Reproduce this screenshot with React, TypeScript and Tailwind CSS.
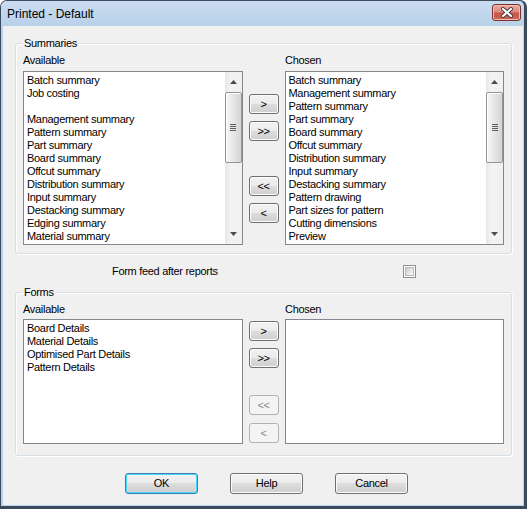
import type { ReactNode } from "react";

const summaryAvailable = [
  "Batch summary",
  "Job costing",
  "",
  "Management summary",
  "Pattern summary",
  "Part summary",
  "Board summary",
  "Offcut summary",
  "Distribution summary",
  "Input summary",
  "Destacking summary",
  "Edging summary",
  "Material summary",
];

const summaryChosen = [
  "Batch summary",
  "Management summary",
  "Pattern summary",
  "Part summary",
  "Board summary",
  "Offcut summary",
  "Distribution summary",
  "Input summary",
  "Destacking summary",
  "Pattern drawing",
  "Part sizes for pattern",
  "Cutting dimensions",
  "Preview",
];

const formsAvailable = ["Board Details", "Material Details", "Optimised Part Details", "Pattern Details"];

function Arrow({ down }: { down?: boolean }) {
  return (
    <svg width="7" height="4" viewBox="0 0 7 4" className={down ? "rotate-180" : ""}>
      <path d="M3.5 0L7 4H0z" fill="#4a4a4a" />
    </svg>
  );
}

function ScrollBar() {
  return (
    <div className="flex w-[17px] flex-col bg-[linear-gradient(to_right,#e6e6e6,#f3f3f3_30%,#f0f0f0)]">
      <div className="flex h-[20px] items-center justify-center">
        <Arrow />
      </div>
      <div className="flex h-[71px] items-center justify-center rounded-[2px] border border-[#959595] bg-[linear-gradient(to_right,#f7f7f7,#e8e8e8_45%,#d4d4d4)] shadow-[inset_1px_1px_0_#ffffff]">
        <div className="flex flex-col gap-[1px]">
          <div className="h-[1px] w-[6px] bg-[#5e5e5e]" />
          <div className="h-[1px] w-[6px] bg-[#5e5e5e]" />
          <div className="h-[1px] w-[6px] bg-[#5e5e5e]" />
          <div className="h-[1px] w-[6px] bg-[#5e5e5e]" />
        </div>
      </div>
      <div className="flex-1" />
      <div className="flex h-[20px] items-center justify-center">
        <Arrow down />
      </div>
    </div>
  );
}

function ListBox({ items, tall }: { items: string[]; tall?: boolean }) {
  return (
    <div className={`flex w-[220px] border border-[#828790] bg-white ${tall ? "h-[174px]" : "h-[125px]"}`}>
      <div className="flex-1 overflow-hidden pl-[3px] pt-[2px]">
        {items.map((item, i) => (
          <div key={i} className="h-[13px] whitespace-nowrap">
            {item}
          </div>
        ))}
      </div>
      {tall ? <ScrollBar /> : null}
    </div>
  );
}

function Btn({ children, disabled, wide, isDefault }: { children: ReactNode; disabled?: boolean; wide?: boolean; isDefault?: boolean }) {
  const size = wide ? "h-[21px] w-[73px]" : "h-[20px] w-[30px]";
  const look = disabled
    ? "border-[#adb2b5] bg-[#f4f4f4] text-[#8a8a8a]"
    : isDefault
      ? "border-[#3c7fb1] bg-[linear-gradient(to_bottom,#f2f2f2_0%,#ebebeb_49%,#dddddd_50%,#cfcfcf_100%)] shadow-[inset_0_0_0_1px_#48d8fb] text-black"
      : "border-[#707070] bg-[linear-gradient(to_bottom,#f2f2f2_0%,#ebebeb_49%,#dddddd_50%,#cfcfcf_100%)] shadow-[inset_0_0_0_1px_#fcfcfc] text-black";
  return (
    <div className={`flex items-center justify-center rounded-[3px] border leading-none ${size} ${look}`}>
      {children}
    </div>
  );
}

function Group({ title, children, className }: { title: string; children: ReactNode; className: string }) {
  return (
    <div
      className={`relative ml-[12px] mr-[11px] rounded-[3px] border border-[#d5dfe5] px-[7px] pt-[10px] shadow-[inset_1px_1px_0_#ffffff,1px_1px_0_#ffffff] ${className}`}
    >
      <span className="absolute -top-[7px] left-[7px] bg-[#f0f0f0] px-[1px]">{title}</span>
      {children}
    </div>
  );
}

function CloseButton() {
  return (
    <div className="flex h-[17px] w-[29px] items-center justify-center rounded-[3px] border border-[#7c3129] bg-[linear-gradient(to_bottom,#e9aa9f_0%,#dc8a7e_45%,#c8564a_55%,#c9665a_100%)] shadow-[inset_0_0_0_1px_#eebcb3]">
      <svg width="14" height="11" viewBox="0 0 14 11">
        <path d="M3 2L11 9M11 2L3 9" stroke="#4a3a3a" strokeWidth="4" strokeLinecap="round" />
        <path d="M3 2L11 9M11 2L3 9" stroke="#ffffff" strokeWidth="2.2" strokeLinecap="round" />
      </svg>
    </div>
  );
}

export default function App() {
  return (
    <div className="flex h-[509px] w-[527px] flex-col rounded-t-[7px] border-t border-r-[3px] border-b-[3px] border-l border-[#3b4b5c] bg-[#b9d1ea] font-['Liberation_Sans',Arial,sans-serif] text-[11px] leading-[13px] tracking-[-0.3px] text-black">
      <div className="flex h-[25px] items-start rounded-t-[6px] bg-[linear-gradient(to_bottom,#cadcf0,#b9d1ea)] pl-[6px] pr-[3px]">
        <span className="mt-[6px] text-[12px] leading-[14px] tracking-normal">Printed - Default</span>
        <div className="ml-auto mt-[3px]">
          <CloseButton />
        </div>
      </div>

      <div className="mb-[1px] ml-[2px] mr-[1px] flex flex-1 flex-col bg-[#f0f0f0]">
        <Group title="Summaries" className="mt-[17px] h-[211px]">
          <div className="flex h-[13px]">
            <span className="w-[262px]">Available</span>
            <span>Chosen</span>
          </div>
          <div className="mt-[4px] flex">
            <ListBox items={summaryAvailable} tall />
            <div className="mx-[6px] flex w-[30px] flex-col pt-[23px]">
              <Btn>&gt;</Btn>
              <div className="mt-[7px]">
                <Btn>&gt;&gt;</Btn>
              </div>
              <div className="mt-[35px]">
                <Btn>&lt;&lt;</Btn>
              </div>
              <div className="mt-[7px]">
                <Btn>&lt;</Btn>
              </div>
            </div>
            <ListBox items={summaryChosen} tall />
          </div>
        </Group>

        <div className="mt-[11px] flex h-[13px] items-center">
          <span className="ml-[109px] w-[291px]">Form feed after reports</span>
          <div className="h-[13px] w-[13px] border border-[#8e8f8f] bg-white p-[1px]">
            <div className="h-full w-full border border-[#b8b8b8] bg-[linear-gradient(135deg,#c9cbce,#eeeeee_70%,#fafafa)]" />
          </div>
        </div>

        <Group title="Forms" className="mt-[14px] h-[164px]">
          <div className="flex h-[13px]">
            <span className="w-[262px]">Available</span>
            <span>Chosen</span>
          </div>
          <div className="mt-[3px] flex">
            <ListBox items={formsAvailable} />
            <div className="mx-[6px] flex w-[30px] flex-col pt-[2px]">
              <Btn>&gt;</Btn>
              <div className="mt-[7px]">
                <Btn>&gt;&gt;</Btn>
              </div>
              <div className="mt-[27px]">
                <Btn disabled>&lt;&lt;</Btn>
              </div>
              <div className="mt-[8px]">
                <Btn disabled>&lt;</Btn>
              </div>
            </div>
            <ListBox items={[]} />
          </div>
        </Group>

        <div className="ml-[122px] mt-[17px] flex gap-[32px]">
          <Btn wide isDefault>
            OK
          </Btn>
          <Btn wide>Help</Btn>
          <Btn wide>Cancel</Btn>
        </div>
      </div>
    </div>
  );
}
